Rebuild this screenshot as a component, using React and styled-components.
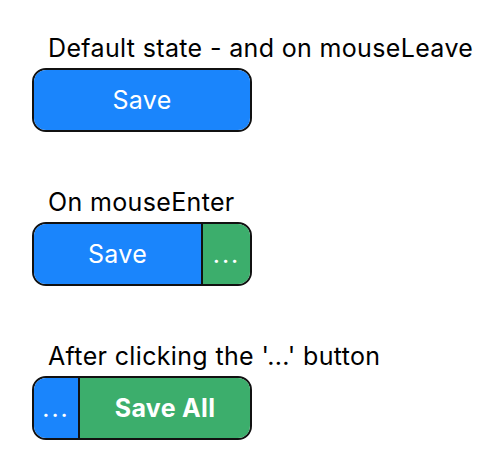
import React from 'react';
import styled, { createGlobalStyle } from 'styled-components';

const GlobalStyle = createGlobalStyle`
  body {
    margin: 8px;
    background: #ffffff;
    font-family: Inter, "Noto Sans", "Liberation Sans", sans-serif;
    color: #000;
  }
`;

const BLUE = '#1a85fc';
const GREEN = '#3cae6c';

const Page = styled.div`
  display: flex;
  flex-direction: column;
  gap: 56px;
  padding: 26px 0 0 24px;
`;

const Section = styled.div`
  display: flex;
  flex-direction: column;
  gap: 5px;
`;

const Caption = styled.div`
  margin-left: 16px;
  font-size: 25px;
  line-height: 29px;
  letter-spacing: 0.35px;
`;

const SplitButton = styled.div`
  display: flex;
  box-sizing: border-box;
  width: 220px;
  height: 64px;
  border: 2px solid #111;
  border-radius: 14px;
  overflow: hidden;
`;

const Segment = styled.button`
  display: flex;
  align-items: center;
  justify-content: center;
  box-sizing: border-box;
  margin: 0;
  padding: 0;
  border: none;
  flex: ${(p) => (p.$width ? `0 0 ${p.$width}px` : '1 1 auto')};
  background: ${(p) => p.$color};
  color: #fff;
  font-family: inherit;
  font-size: 25px;
  letter-spacing: ${(p) => (p.$dots ? '2px' : '0.3px')};
  font-weight: ${(p) => (p.$bold ? 700 : 400)};
  cursor: pointer;
  border-left: ${(p) => (p.$divider === 'left' ? '2px solid #111' : 'none')};
  border-right: ${(p) => (p.$divider === 'right' ? '2px solid #111' : 'none')};
`;

const App = () => {
  return (
    <>
      <GlobalStyle />
      <Page>
        <Section>
          <Caption>Default state - and on mouseLeave</Caption>
          <SplitButton>
            <Segment $color={BLUE}>Save</Segment>
          </SplitButton>
        </Section>
        <Section>
          <Caption>On mouseEnter</Caption>
          <SplitButton>
            <Segment $color={BLUE}>Save</Segment>
            <Segment $color={GREEN} $width={49} $divider="left" $dots>...</Segment>
          </SplitButton>
        </Section>
        <Section>
          <Caption>After clicking the '...' button</Caption>
          <SplitButton>
            <Segment $color={BLUE} $width={46} $divider="right" $dots>...</Segment>
            <Segment $color={GREEN} $bold>Save All</Segment>
          </SplitButton>
        </Section>
      </Page>
    </>
  );
};

export default App;
